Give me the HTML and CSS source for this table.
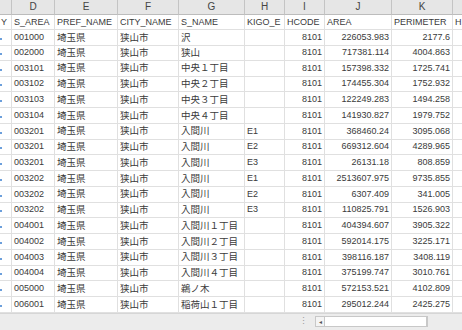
FILE: index.html
```html
<!DOCTYPE html>
<html lang="ja">
<head>
<meta charset="utf-8">
<link rel="stylesheet" href="styles.css">
</head>
<body>
<div class="sheet">
  <div class="grid">
    <div class="row head">
      <div class="c">&nbsp;</div><div class="c">D</div><div class="c">E</div><div class="c">F</div><div class="c">G</div><div class="c">H</div><div class="c">I</div><div class="c">J</div><div class="c">K</div><div class="c last"></div>
    </div>
    <div class="row">
      <div class="c cut">Y</div><div class="c">S_AREA</div><div class="c">PREF_NAME</div><div class="c">CITY_NAME</div><div class="c">S_NAME</div><div class="c">KIGO_E</div><div class="c">HCODE</div><div class="c">AREA</div><div class="c">PERIMETER</div><div class="c last">H</div>
    </div>
  </div>
  <div class="grid data" id="data"></div>
  <div class="footer">
    <span class="split">⋮</span>
    <div class="hscroll">
      <span class="arrow">◂</span>
      <span class="thumb"></span>
    </div>
  </div>
</div>
<script src="app.js"></script>
</body>
</html>
```

FILE: app.js
```js
const rows = [
  ["001000","沢","","226053.983","2177.6"],
  ["002000","狭山","","717381.114","4004.863"],
  ["003101","中央１丁目","","157398.332","1725.741"],
  ["003102","中央２丁目","","174455.304","1752.932"],
  ["003103","中央３丁目","","122249.283","1494.258"],
  ["003104","中央４丁目","","141930.827","1979.752"],
  ["003201","入間川","E1","368460.24","3095.068"],
  ["003201","入間川","E2","669312.604","4289.965"],
  ["003201","入間川","E3","26131.18","808.859"],
  ["003202","入間川","E1","2513607.975","9735.855"],
  ["003202","入間川","E2","6307.409","341.005"],
  ["003202","入間川","E3","110825.791","1526.903"],
  ["004001","入間川１丁目","","404394.607","3905.322"],
  ["004002","入間川２丁目","","592014.175","3225.171"],
  ["004003","入間川３丁目","","398116.187","3408.119"],
  ["004004","入間川４丁目","","375199.747","3010.761"],
  ["005000","鵜ノ木","","572153.521","4102.809"],
  ["006001","稲荷山１丁目","","295012.244","2425.275"]
];
const data = document.getElementById("data");
for (const r of rows) {
  const row = document.createElement("div");
  row.className = "row";
  const cells = [
    ['<span class="mark"></span>', "c"],
    [r[0], "c"],
    ["埼玉県", "c j"],
    ["狭山市", "c j"],
    [r[1], "c j"],
    [r[2], "c"],
    ["8101", "c num"],
    [r[3], "c num"],
    [r[4], "c num"],
    ["", "c last"]
  ];
  for (const [t, cls] of cells) {
    const d = document.createElement("div");
    d.className = cls;
    d.innerHTML = t;
    row.appendChild(d);
  }
  data.appendChild(row);
}
```

FILE: styles.css
```css
html, body {
  margin: 0;
  padding: 0;
  background: #ffffff;
  overflow: hidden;
}
.sheet {
  width: 462px;
  height: 330px;
  display: flex;
  flex-direction: column;
  font-family: "Liberation Sans", "Noto Sans CJK JP", sans-serif;
  font-size: 9px;
  color: #3a3a3a;
}
.row {
  display: grid;
  grid-template-columns: 12px 43px 63px 61px 66px 40px 40px 67px 61px 1fr;
  height: 15.75px;
}
.c {
  box-sizing: border-box;
  border-right: 1px solid #e0e0e0;
  border-bottom: 1px solid #e0e0e0;
  padding: 0 2px;
  white-space: nowrap;
  overflow: hidden;
  display: flex;
  align-items: center;
  line-height: 1;
}
.c.last {
  border-right: none;
}
.head {
  height: 15px;
  background: #e6e6e6;
  color: #444444;
}
.head .c {
  justify-content: center;
  border-right-color: #c4c4c4;
  border-bottom-color: #bcbcbc;
  font-size: 10px;
}
.grid > .row:nth-child(2) {
  height: 15px;
}
.cut {
  justify-content: flex-end;
  padding-right: 4px;
}
.j {
  font-size: 9.5px;
}
.num {
  justify-content: flex-end;
}
.mark {
  display: block;
  width: 2px;
  height: 2px;
  margin-left: -2px;
  margin-top: 3px;
  background: #6c9fdb;
}
.data {
  flex: none;
}
.footer {
  flex: 1;
  background: #ececec;
  border-top: 1px solid #d6d6d6;
  display: flex;
  align-items: center;
  padding-left: 299px;
  gap: 7px;
}
.split {
  color: #9a9a9a;
  font-size: 9px;
  line-height: 1;
}
.hscroll {
  display: flex;
  height: 9px;
  border: 1px solid #c8c8c8;
  background: #f4f4f4;
}
.arrow {
  width: 8px;
  font-size: 6px;
  color: #555555;
  display: flex;
  align-items: center;
  justify-content: center;
  border-right: 1px solid #c8c8c8;
}
.thumb {
  width: 101px;
  background: #ffffff;
  border-right: 1px solid #c8c8c8;
}
```
